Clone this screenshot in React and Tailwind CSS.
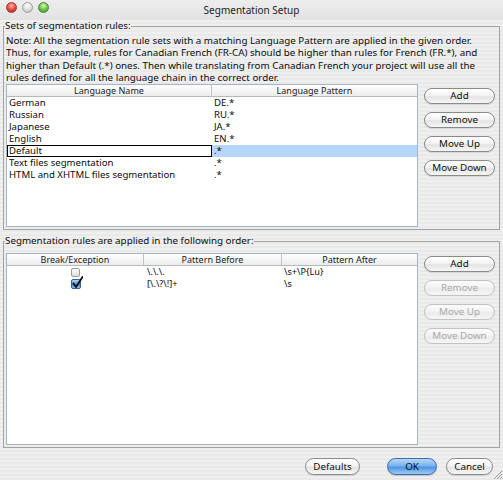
import React from "react";

function AquaButton({ children, kind = "normal", w, h = "h-[16px]" }) {
  const styles = {
    normal:
      "border-[#8a8a8a] text-[#111] bg-[linear-gradient(to_bottom,#ffffff_0%,#f4f4f4_45%,#e4e4e4_55%,#f6f6f6_100%)] shadow-[0_1px_1px_rgba(0,0,0,0.12)]",
    disabled:
      "border-[#c2c2c2] text-[#a9a9a9] bg-[linear-gradient(to_bottom,#fbfbfb_0%,#f3f3f3_45%,#ebebeb_55%,#f6f6f6_100%)]",
    primary:
      "border-[#3d6aa8] text-[#0a0a0a] bg-[linear-gradient(to_bottom,#b7d8fa_0%,#78b3ef_45%,#4f95e4_55%,#9ccbf6_100%)] shadow-[0_1px_1px_rgba(0,0,0,0.18)]",
  };
  return (
    <div
      className={`${w} ${h} rounded-full border flex items-center justify-center text-[9.8px] leading-none ${styles[kind]}`}
    >
      {children}
    </div>
  );
}

function Checkbox({ checked }) {
  if (!checked) {
    return (
      <div className="w-[9px] h-[9px] rounded-[2px] border border-[#9c9c9c] bg-[linear-gradient(to_bottom,#ffffff,#dedede)]" />
    );
  }
  return (
    <div className="relative w-[10px] h-[10px] rounded-[2px] border border-[#3d5f93] bg-[linear-gradient(to_bottom,#b6d4f5,#5a95de_50%,#3f7fd6_51%,#8ebff2)]">
      <svg
        className="absolute -top-[4px] left-0 w-[11px] h-[13px]"
        viewBox="0 0 11 13"
      >
        <path
          d="M1.5 7.5 L4 11 L10.5 1"
          fill="none"
          stroke="#111"
          strokeWidth="1.9"
          strokeLinecap="round"
          strokeLinejoin="round"
        />
      </svg>
    </div>
  );
}

function Light({ cls }) {
  return <div className={`w-[11px] h-[11px] rounded-full border ${cls}`} />;
}

export default function App() {
  const langs = [
    ["German", "DE.*"],
    ["Russian", "RU.*"],
    ["Japanese", "JA.*"],
    ["English", "EN.*"],
    ["Default", ".*"],
    ["Text files segmentation", ".*"],
    ["HTML and XHTML files segmentation", ".*"],
  ];
  const rules = [
    [false, "\\.\\.\\.", "\\s+\\P{Lu}"],
    [true, "[\\.\\?\\!]+", "\\s"],
  ];

  return (
    <div className="relative w-[503px] h-[480px] overflow-hidden font-['Noto_Sans',sans-serif] text-[9.6px] text-[#0c0c0c] bg-[repeating-linear-gradient(to_bottom,#efefef_0px,#efefef_2px,#e9e9e9_2px,#e9e9e9_4px)]">
      {/* Title bar */}
      <div className="h-[20px] grid grid-cols-[1fr_auto_1fr] items-start bg-[linear-gradient(to_bottom,#ededed,#e3e3e3)]">
        <div className="flex gap-[5px] pl-[6px] pt-[2px]">
          <Light cls="border-[#a8362d] bg-[radial-gradient(circle_at_50%_30%,#ffb3a8_0%,#e2463b_55%,#a9231a_100%)]" />
          <Light cls="border-[#a0a0a0] bg-[radial-gradient(circle_at_50%_30%,#ffffff_0%,#dcdcdc_55%,#b4b4b4_100%)]" />
          <Light cls="border-[#3f8a2a] bg-[radial-gradient(circle_at_50%_30%,#d5f7b0_0%,#67c244_55%,#2f8a1d_100%)]" />
        </div>
        <div className="text-[10px] leading-[18px] text-[#222] pt-[1px]">
          Segmentation Setup
        </div>
        <div />
      </div>

      <div className="px-[3px]">
        {/* Group 1 */}
        <fieldset className="border border-[#a3a3a3] pl-[2px] pr-[4px] pb-[2px]">
          <legend className="-ml-[1px] leading-[12px] text-[9.8px]">
            Sets of segmentation rules:
          </legend>
          <p className="mt-[3px] leading-[12.3px] whitespace-nowrap text-[9.8px]">
            Note: All the segmentation rule sets with a matching Language Pattern are applied in the given order.
            <br />
            Thus, for example, rules for Canadian French (FR-CA) should be higher than rules for French (FR.*), and
            <br />
            higher than Default (.*) ones. Then while translating from Canadian French your project will use all the
            <br />
            rules defined for all the language chain in the correct order.
          </p>
          <div className="flex">
            <div className="w-[412px] h-[143px] border border-[#a3b5cb] bg-white flex flex-col">
              <div className="grid grid-cols-[205px_1fr] h-[12px] border-b border-[#b9b9b9] bg-[linear-gradient(to_bottom,#ffffff,#ececec)] text-[9px] leading-[11px] text-[#222]">
                <div className="text-center border-r border-[#c4c4c4]">Language Name</div>
                <div className="text-center">Language Pattern</div>
              </div>
              {langs.map(([n, p], i) =>
                i === 4 ? (
                  <div key={n} className="grid grid-cols-[205px_1fr] h-[12px] leading-[10px]">
                    <div className="border border-black bg-white pl-[1px]">{n}</div>
                    <div className="bg-[#b7d6fb] pl-[2px] leading-[12px]">{p}</div>
                  </div>
                ) : (
                  <div key={n} className="grid grid-cols-[205px_1fr] h-[12px] leading-[12px]">
                    <div className="pl-[2px]">{n}</div>
                    <div className="pl-[2px]">{p}</div>
                  </div>
                )
              )}
            </div>
            <div className="ml-[6px] w-[71px] pt-[4px] flex flex-col gap-[8px]">
              <AquaButton w="w-[71px]">Add</AquaButton>
              <AquaButton w="w-[71px]">Remove</AquaButton>
              <AquaButton w="w-[71px]">Move Up</AquaButton>
              <AquaButton w="w-[71px]">Move Down</AquaButton>
            </div>
          </div>
        </fieldset>

        {/* Group 2 */}
        <fieldset className="mt-[5px] border border-[#a3a3a3] pl-[2px] pr-[4px] pb-[2px]">
          <legend className="-ml-[1px] leading-[12px] text-[9.8px]">
            Segmentation rules are applied in the following order:
          </legend>
          <div className="flex mt-[6px]">
            <div className="w-[412px] h-[192px] border border-[#a3b5cb] bg-white flex flex-col">
              <div className="grid grid-cols-[137px_138px_1fr] h-[12px] border-b border-[#b9b9b9] bg-[linear-gradient(to_bottom,#ffffff,#ececec)] text-[9px] leading-[11px] text-[#222]">
                <div className="text-center border-r border-[#c4c4c4]">Break/Exception</div>
                <div className="text-center border-r border-[#c4c4c4]">Pattern Before</div>
                <div className="text-center">Pattern After</div>
              </div>
              {rules.map(([c, b, a], i) => (
                <div key={i} className="grid grid-cols-[137px_138px_1fr] h-[12px] leading-[12px] text-[9.2px]">
                  <div className="flex items-center justify-center">
                    <Checkbox checked={c} />
                  </div>
                  <div className="pl-[3px]">{b}</div>
                  <div className="pl-[2px]">{a}</div>
                </div>
              ))}
            </div>
            <div className="ml-[6px] w-[71px] pt-[3px] flex flex-col gap-[8px]">
              <AquaButton w="w-[71px]">Add</AquaButton>
              <AquaButton w="w-[71px]" kind="disabled">Remove</AquaButton>
              <AquaButton w="w-[71px]" kind="disabled">Move Up</AquaButton>
              <AquaButton w="w-[71px]" kind="disabled">Move Down</AquaButton>
            </div>
          </div>
        </fieldset>

        {/* Bottom buttons */}
        <div className="flex justify-end items-center mt-[10px] pr-[7px]">
          <AquaButton w="w-[55px]" h="h-[17px]">Defaults</AquaButton>
          <div className="w-[27px]" />
          <AquaButton w="w-[50px]" h="h-[17px]" kind="primary">OK</AquaButton>
          <div className="w-[9px]" />
          <AquaButton w="w-[47px]" h="h-[17px]">Cancel</AquaButton>
        </div>
      </div>

      {/* Resize grip */}
      <svg className="absolute right-0 bottom-0 w-[11px] h-[11px]" viewBox="0 0 11 11">
        <path d="M10 2 L2 10 M10 5 L5 10 M10 8 L8 10" stroke="#9a9a9a" strokeWidth="1" />
      </svg>
    </div>
  );
}
